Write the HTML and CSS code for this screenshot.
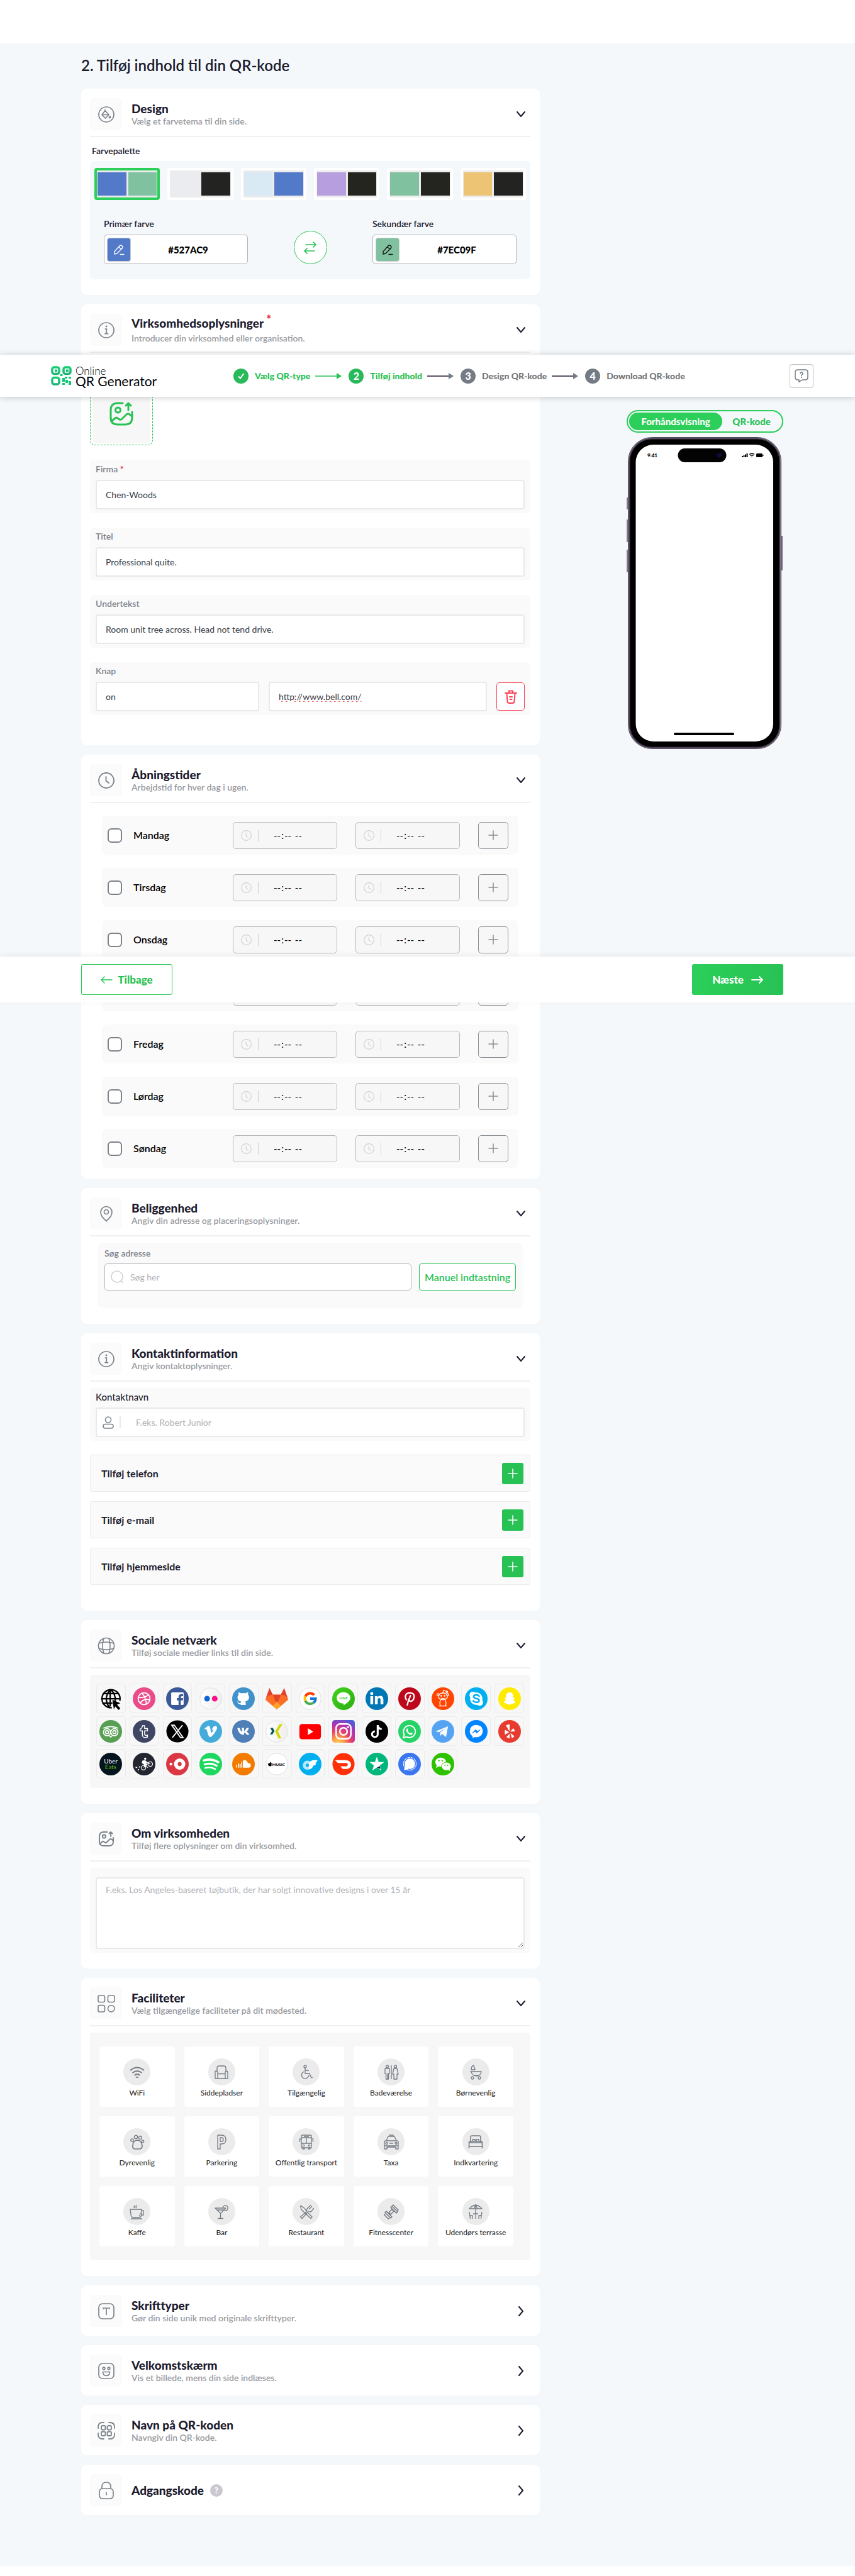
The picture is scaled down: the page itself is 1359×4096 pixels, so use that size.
FILE: index.html
```html
<!DOCTYPE html>
<html lang="da">
<head>
<meta charset="utf-8">
<meta name="viewport" content="width=device-width, initial-scale=1">
<title>Online QR Generator</title>
<link rel="stylesheet" href="styles.css">
</head>
<body>
<svg class="defs" width="0" height="0" aria-hidden="true">
  <defs>
    <linearGradient id="lg" x1="0" y1="0" x2="0" y2="1"><stop offset="0" stop-color="#10d070"/><stop offset="1" stop-color="#22b378"/></linearGradient>
    <linearGradient id="pale" x1="0" y1="0" x2="1" y2="0"><stop offset="0" stop-color="#fff"/><stop offset="1" stop-color="#eee"/></linearGradient>
    <linearGradient id="line" x1="0" y1="0" x2="1" y2="1"><stop offset="0" stop-color="#3fd31a"/><stop offset="1" stop-color="#2fae12"/></linearGradient>
    <radialGradient id="ig" cx=".25" cy="1.05" r="1.15"><stop offset="0" stop-color="#fed75e"/><stop offset=".25" stop-color="#f99b44"/><stop offset=".5" stop-color="#e8416c"/><stop offset=".75" stop-color="#b232b0"/><stop offset="1" stop-color="#4c5fd8"/></radialGradient>
  </defs>
  <symbol id="down" viewBox="0 0 16 16"><path d="M2 4l6 7 6-7" fill="none" stroke="currentColor" stroke-width="2" stroke-linecap="round" stroke-linejoin="round"/></symbol>
  <symbol id="right" viewBox="0 0 16 16"><path d="M5 1l6 7-6 7" fill="none" stroke="currentColor" stroke-width="2" stroke-linecap="round" stroke-linejoin="round"/></symbol>
  <symbol id="plus" viewBox="0 0 16 16"><path d="M8 1v14M1 8h14" fill="none" stroke="currentColor" stroke-width="1.6" stroke-linecap="round"/></symbol>
  <symbol id="clock" viewBox="0 0 26 26"><g fill="none" stroke="currentColor" stroke-width="1.8" stroke-linecap="round"><circle cx="13" cy="13" r="12"/><path d="M12.500 7v6.500l4.500 3.500"/></g></symbol>
  <symbol id="info" viewBox="0 0 26 26"><g fill="none" stroke="currentColor" stroke-width="1.700" stroke-linecap="round"><circle cx="13" cy="13" r="12"/><path d="M11.300 11h2v7.500M11 18.700h4.500"/><circle cx="13" cy="7" r=".6" fill="currentColor"/></g></symbol>
  <symbol id="picture" viewBox="0 0 40 40"><g fill="none" stroke="currentColor" stroke-width="3" stroke-linecap="round" stroke-linejoin="round"><path d="M22 3H14Q3 3 3 14v12q0 11 11 11h12q11 0 11-11V17"/><circle cx="14.500" cy="14" r="4"/><path d="M31 14V3M27 7l4-4 4 4M4 32l6-5q2-2 4 0l3 2q2 1 4-1l7-7q3-2 5 0l4 3"/></g></symbol>
  <symbol id="pencil" viewBox="0 0 18 18"><g fill="none" stroke="currentColor" stroke-width="1.300" stroke-linejoin="round" stroke-linecap="round"><path d="M2 16V12L10 3q2-2 4 0t0 4L6 15z M9 5l4 3.500M11 16.500h6"/></g></symbol>
</svg>

<header class="topbar">
  <a class="logo" href="#">
    <svg width="33" height="31" viewBox="0 0 33 31" aria-hidden="true"><g fill="none" stroke="url(#lg)" stroke-width="3.500"><rect x="2" y="2" width="11" height="10.500" rx="3"/><rect x="20" y="2" width="11" height="10.500" rx="3"/><rect x="2" y="18.500" width="11" height="10.500" rx="3"/></g><g fill="#12c777"><path d="M6 5.500h4v4H6zM24 5.500h4v4h-4zM14.500 13h4v3h-4zM18 19h4v6h-4zM22 17h4v3h-4zM28 17h4v3h-4zM23 22h4v5h-4zM18 27h4v3h-4zM28 24h4v6h-4z"/></g></svg>
    <span class="logo-text"><span class="logo-a">Online</span><span class="logo-b">QR Generator</span></span>
  </a>
  <ol class="steps">
    <li class="on"><span class="num"><svg width="12" height="12" viewBox="0 0 12 12" aria-hidden="true"><path d="M2 6.500L5 9.500 10.500 2" fill="none" stroke="#fff" stroke-width="2"/></svg></span>Vælg QR-type<svg class="arr" width="42" height="12" viewBox="0 0 42 12" aria-hidden="true"><path d="M0 6h36" stroke="#28c254" stroke-width="1.500"/><path d="M34 1l8 5-8 5z" fill="#28c254"/></svg></li>
    <li class="on"><span class="num">2</span>Tilføj indhold<svg class="arr" width="42" height="12" viewBox="0 0 42 12" aria-hidden="true"><path d="M0 6h36" stroke="#281a30" stroke-width="1.500"/><path d="M34 1l8 5-8 5z" fill="#757b84"/></svg></li>
    <li><span class="num">3</span>Design QR-kode<svg class="arr" width="42" height="12" viewBox="0 0 42 12" aria-hidden="true"><path d="M0 6h36" stroke="#281a30" stroke-width="1.500"/><path d="M34 1l8 5-8 5z" fill="#757b84"/></svg></li>
    <li><span class="num">4</span>Download QR-kode</li>
  </ol>
  <button class="help" type="button" aria-label="Hjælp"><svg width="22" height="22" viewBox="0 0 22 22" aria-hidden="true"><g fill="none" stroke="#757b84" stroke-width="1.500" stroke-linecap="round" stroke-linejoin="round"><path d="M5 1h12q4 0 4 4v8q0 4-4 4h-5l-5 3.500V17H5q-4 0-4-4V5q0-4 4-4z"/><path d="M9 7q0-2 2-2t2 2q0 1-1 1.700T11 10.500"/><circle cx="11" cy="13" r=".4"/></g></svg></button>
</header>

<main class="page">
  <h1>2. Tilføj indhold til din QR-kode</h1>
  <div class="columns">
    <div class="cards">

      <section class="card">
        <div class="head ruled">
          <span class="tile"><svg width="26" height="26" viewBox="0 0 26 26" aria-hidden="true"><g fill="none" stroke="currentColor" stroke-width="1.700" stroke-linejoin="round"><circle cx="13" cy="13" r="12"/><path d="M11 5v3M11 7l6 6.500-5.500 5.500L6 13.500z M6 13.500h11"/></g><path d="M19 15q2 3 0 4-2 .5-2-1.500 1-1 2-2.500z" fill="currentColor" stroke="currentColor"/></svg></span>
          <div class="head-text"><h2>Design</h2><p>Vælg et farvetema til din side.</p></div>
          <button class="chev" type="button" aria-label="Luk Design"><svg width="16" height="16"><use href="#down"/></svg></button>
        </div>
        <p class="palette-label">Farvepalette</p>
        <div class="palette">
          <div class="swatches">
            <button type="button" class="swatch chosen" aria-label="Blå og grøn"><i style="background:#527ac9"></i><i style="background:#80c1a0"></i></button>
            <button type="button" class="swatch" aria-label="Grå og sort"><i style="background:#ebecf0"></i><i style="background:#232322"></i></button>
            <button type="button" class="swatch" aria-label="Lyseblå og blå"><i style="background:#daeaf5"></i><i style="background:#527ac9"></i></button>
            <button type="button" class="swatch" aria-label="Lilla og sort"><i style="background:#b69edf"></i><i style="background:#252520"></i></button>
            <button type="button" class="swatch" aria-label="Grøn og sort"><i style="background:#80c1a0"></i><i style="background:#252520"></i></button>
            <button type="button" class="swatch" aria-label="Gul og sort"><i style="background:#ecc474"></i><i style="background:#232322"></i></button>
          </div>
          <div class="colors">
            <div class="color">
              <label for="c1">Primær farve</label>
              <div class="color-box"><span class="chip blue"><svg width="18" height="18" aria-hidden="true"><use href="#pencil"/></svg></span><input id="c1" type="text" value="#527AC9"></div>
            </div>
            <button class="swap" type="button" aria-label="Byt farver"><svg width="20" height="22" viewBox="0 0 20 22" aria-hidden="true"><path d="M3 6h16M15 2l4 4-4 4M17 16H1M5 12l-4 4 4 4" fill="none" stroke="#28c254" stroke-width="1.700" stroke-linecap="round" stroke-linejoin="round"/></svg></button>
            <div class="color">
              <label for="c2">Sekundær farve</label>
              <div class="color-box"><span class="chip green"><svg width="18" height="18" aria-hidden="true"><use href="#pencil"/></svg></span><input id="c2" type="text" value="#7EC09F"></div>
            </div>
          </div>
        </div>
      </section>

      <section class="card company">
        <div class="head ruled">
          <span class="tile"><svg width="26" height="26" aria-hidden="true"><use href="#info"/></svg></span>
          <div class="head-text spaced"><h2>Virksomhedsoplysninger <sup>*</sup></h2><p>Introducer din virksomhed eller organisation.</p></div>
          <button class="chev" type="button" aria-label="Luk Virksomhedsoplysninger"><svg width="16" height="16"><use href="#down"/></svg></button>
        </div>
        <button class="upload" type="button" aria-label="Upload billede"><span><svg width="40" height="40" aria-hidden="true"><use href="#picture"/></svg></span></button>
        <div class="group"><label for="f1">Firma <b>*</b></label><input id="f1" class="field" type="text" value="Chen-Woods"></div>
        <div class="group"><label for="f2">Titel</label><input id="f2" class="field" type="text" value="Professional quite."></div>
        <div class="group"><label for="f3">Undertekst</label><input id="f3" class="field" type="text" value="Room unit tree across. Head not tend drive."></div>
        <div class="group"><label for="f4">Knap</label>
          <div class="pair"><input id="f4" class="field" type="text" value="on"><input class="field typo" type="text" value="http://www.bell.com/" aria-label="Link"><button class="trash" type="button" aria-label="Slet knap"><svg width="20" height="22" viewBox="0 0 20 22" aria-hidden="true"><g fill="none" stroke="#fa4156" stroke-width="2" stroke-linecap="round" stroke-linejoin="round"><path d="M1 5h18M7 4V1.500h6V4M3.500 6l1 12q0 3 3 3h5q3 0 3-3l1-12M8 11h4M8.500 15h3"/></g></svg></button></div>
        </div>
      </section>

      <section class="card hours">
        <div class="head ruled">
          <span class="tile"><svg width="26" height="26" aria-hidden="true"><use href="#clock"/></svg></span>
          <div class="head-text"><h2>Åbningstider</h2><p>Arbejdstid for hver dag i ugen.</p></div>
          <button class="chev" type="button" aria-label="Luk Åbningstider"><svg width="16" height="16"><use href="#down"/></svg></button>
        </div>
        <div class="days">
          <div class="day"><label><input type="checkbox">Mandag</label><span class="time"><svg width="17" height="17"><use href="#clock"/></svg><input type="time" disabled aria-label="Mandag fra"></span><span class="time"><svg width="17" height="17"><use href="#clock"/></svg><input type="time" disabled aria-label="Mandag til"></span><button type="button" aria-label="Tilføj tid"><svg width="16" height="16"><use href="#plus"/></svg></button></div>
          <div class="day"><label><input type="checkbox">Tirsdag</label><span class="time"><svg width="17" height="17"><use href="#clock"/></svg><input type="time" disabled aria-label="Tirsdag fra"></span><span class="time"><svg width="17" height="17"><use href="#clock"/></svg><input type="time" disabled aria-label="Tirsdag til"></span><button type="button" aria-label="Tilføj tid"><svg width="16" height="16"><use href="#plus"/></svg></button></div>
          <div class="day"><label><input type="checkbox">Onsdag</label><span class="time"><svg width="17" height="17"><use href="#clock"/></svg><input type="time" disabled aria-label="Onsdag fra"></span><span class="time"><svg width="17" height="17"><use href="#clock"/></svg><input type="time" disabled aria-label="Onsdag til"></span><button type="button" aria-label="Tilføj tid"><svg width="16" height="16"><use href="#plus"/></svg></button></div>
          <div class="day"><label><input type="checkbox" aria-label="Torsdag"></label><span class="time"><input type="time" disabled aria-label="Torsdag fra"></span><span class="time"><input type="time" disabled aria-label="Torsdag til"></span><button type="button" aria-label="Tilføj tid"></button></div>
          <div class="day"><label><input type="checkbox">Fredag</label><span class="time"><svg width="17" height="17"><use href="#clock"/></svg><input type="time" disabled aria-label="Fredag fra"></span><span class="time"><svg width="17" height="17"><use href="#clock"/></svg><input type="time" disabled aria-label="Fredag til"></span><button type="button" aria-label="Tilføj tid"><svg width="16" height="16"><use href="#plus"/></svg></button></div>
          <div class="day"><label><input type="checkbox">Lørdag</label><span class="time"><svg width="17" height="17"><use href="#clock"/></svg><input type="time" disabled aria-label="Lørdag fra"></span><span class="time"><svg width="17" height="17"><use href="#clock"/></svg><input type="time" disabled aria-label="Lørdag til"></span><button type="button" aria-label="Tilføj tid"><svg width="16" height="16"><use href="#plus"/></svg></button></div>
          <div class="day"><label><input type="checkbox">Søndag</label><span class="time"><svg width="17" height="17"><use href="#clock"/></svg><input type="time" disabled aria-label="Søndag fra"></span><span class="time"><svg width="17" height="17"><use href="#clock"/></svg><input type="time" disabled aria-label="Søndag til"></span><button type="button" aria-label="Tilføj tid"><svg width="16" height="16"><use href="#plus"/></svg></button></div>
        </div>
      </section>

      <section class="card">
        <div class="head ruled">
          <span class="tile"><svg width="26" height="26" viewBox="0 0 26 26" aria-hidden="true"><g fill="none" stroke="currentColor" stroke-width="1.700"><path d="M13 24.500Q4 17 4 10.500a9 9 0 0 1 18 0Q22 17 13 24.500z"/><circle cx="13" cy="10" r="3.500"/></g></svg></span>
          <div class="head-text"><h2>Beliggenhed</h2><p>Angiv din adresse og placeringsoplysninger.</p></div>
          <button class="chev" type="button" aria-label="Luk Beliggenhed"><svg width="16" height="16"><use href="#down"/></svg></button>
        </div>
        <div class="address">
          <label for="adr">Søg adresse</label>
          <div class="address-row">
            <div class="search"><svg width="21" height="21" viewBox="0 0 21 21" aria-hidden="true"><g fill="none" stroke="#d0d2d5" stroke-width="1.500"><circle cx="10" cy="10" r="9"/><path d="M16 16l4 4"/></g></svg><input id="adr" type="text" placeholder="Søg her"></div>
            <button class="manual" type="button">Manuel indtastning</button>
          </div>
        </div>
      </section>

      <section class="card contact">
        <div class="head ruled">
          <span class="tile"><svg width="26" height="26" aria-hidden="true"><use href="#info"/></svg></span>
          <div class="head-text"><h2>Kontaktinformation</h2><p>Angiv kontaktoplysninger.</p></div>
          <button class="chev" type="button" aria-label="Luk Kontaktinformation"><svg width="16" height="16"><use href="#down"/></svg></button>
        </div>
        <div class="group first"><label class="dark" for="kn">Kontaktnavn</label>
          <div class="field person"><svg width="18" height="20" viewBox="0 0 18 20" aria-hidden="true"><g fill="none" stroke="#7b838b" stroke-width="1.500"><circle cx="9" cy="5.500" r="4.500"/><rect x="1" y="12.500" width="16" height="6.500" rx="3.200"/></g></svg><input id="kn" type="text" placeholder="F.eks. Robert Junior"></div>
        </div>
        <div class="adders">
          <div class="adder">Tilføj telefon<button type="button" aria-label="Tilføj telefon"><svg width="16" height="16"><use href="#plus"/></svg></button></div>
          <div class="adder">Tilføj e-mail<button type="button" aria-label="Tilføj e-mail"><svg width="16" height="16"><use href="#plus"/></svg></button></div>
          <div class="adder">Tilføj hjemmeside<button type="button" aria-label="Tilføj hjemmeside"><svg width="16" height="16"><use href="#plus"/></svg></button></div>
        </div>
      </section>

      <section class="card">
        <div class="head ruled">
          <span class="tile"><svg width="28" height="28" viewBox="0 0 28 28" aria-hidden="true"><g fill="none" stroke="currentColor" stroke-width="1.600"><circle cx="14" cy="14" r="12.500"/><path d="M10 2Q6 14 10 26M18 2q4 12 0 24M2 10q12-4 24 0M2 18q12 4 24 0"/></g></svg></span>
          <div class="head-text"><h2>Sociale netværk</h2><p>Tilføj sociale medier links til din side.</p></div>
          <button class="chev" type="button" aria-label="Luk Sociale netværk"><svg width="16" height="16"><use href="#down"/></svg></button>
        </div>
        <div class="social">
          <button type="button" aria-label="Web"><svg viewBox="0 0 40 40"><g fill="none" stroke="#000" stroke-width="2.500"><path d="M22 36A16 16 0 1 1 36 24M18 36Q6 20 19 4M20 4q9 8 8 20M19 4v30M3 20h33M6 11h27M5 28h18"/></g><path d="M23 22l14 6-6 2.500 6 6.500-3 3-6-6.500-2.500 5z" fill="#000"/></svg></button>
          <button type="button" aria-label="Dribbble"><svg viewBox="0 0 40 40"><circle cx="20" cy="20" r="20" fill="#ea4c89"/><g fill="none" stroke="#fff" stroke-width="2"><circle cx="20" cy="20" r="10.500"/><path d="M16 10q8 9 8 20M10 18q12 1 18-5M13 28q6-9 17-6"/></g></svg></button>
          <button type="button" aria-label="Facebook"><svg viewBox="0 0 40 40"><circle cx="20" cy="20" r="20" fill="#3b5998"/><rect x="9" y="9" width="22" height="22" rx="1.500" fill="#fff"/><path d="M22 31v-8h-3v-4h3v-2q0-5 5-5h3v3.500h-2q-2 0-2 2V19h4l-.6 4H26v8z" fill="#3b5998"/></svg></button>
          <button type="button" aria-label="Flickr"><svg viewBox="0 0 40 40"><circle cx="20" cy="20" r="19" fill="url(#pale)" stroke="#ddd"/><circle cx="13.500" cy="20" r="5" fill="#1165d8"/><circle cx="27" cy="20" r="5" fill="#ff0f84"/></svg></button>
          <button type="button" aria-label="GitHub"><svg viewBox="0 0 40 40"><circle cx="20" cy="20" r="20" fill="#4191cb"/><path d="M20 10q-2 0-4 .6-3-2-4.600-1.600-.8 2 0 4Q9 15 9.500 19q.5 5.500 6.500 6-1 1-1 2.500-3 1-4.500-1.500-1-1.500-2-1.200 0 .5 1 1.200 1 4 5.500 3.500V31h9v-4q0-2-1-2.500 6-.5 6.800-6 .3-3.500-1.700-5.500.7-2.500-.2-4-1.800-.2-4.400 1.600Q22 10 20 10z" fill="#fff"/></svg></button>
          <button type="button" aria-label="GitLab"><svg viewBox="0 0 40 40"><path d="M1 18L7 1l6 12h14l6-12 6 17z" fill="#e24329"/><path d="M1 18l6-4 6-1h14l6 1 6 4 1 4-20 17L0 22z" fill="#fc6d26"/><path d="M13 13h14l-7 17z" fill="#e24329"/><path d="M20 39l-7-6 7-8 7 8z" fill="#fca326"/></svg></button>
          <button type="button" aria-label="Google"><svg viewBox="0 0 40 40"><circle cx="20" cy="20" r="19" fill="#fff" stroke="#ddd"/><g fill="none" stroke-width="4.500"><path d="M27 13.500A9.500 9.500 0 0 0 11.500 16" stroke="#ff3d00"/><path d="M11.500 16a9.500 9.500 0 0 0 0 8" stroke="#ffc107"/><path d="M11.500 24A9.500 9.500 0 0 0 26 27" stroke="#4caf50"/><path d="M20 20h9.500q0 4.500-3.500 7" stroke="#1976d2"/></g></svg></button>
          <button type="button" aria-label="LINE"><svg viewBox="0 0 40 40"><circle cx="20" cy="20" r="20" fill="url(#line)"/><path d="M20 8.500c7 0 12 4.500 12 10 0 6-8 10.500-12 13.500q1-3 0-3.500c-7 0-12-4.500-12-10s5-10 12-10z" fill="#fff"/><text x="20" y="21.500" text-anchor="middle" font-size="7" font-weight="700" fill="#3c3">LINE</text></svg></button>
          <button type="button" aria-label="LinkedIn"><svg viewBox="0 0 40 40"><circle cx="20" cy="20" r="20" fill="#0077b5"/><g fill="#fff"><circle cx="11" cy="11" r="2.700"/><path d="M8.500 15.500h5V30h-5zM16.500 15.500h4.800v2q1.500-2.500 4.700-2.500 5.500 0 5.500 6.500V30h-5v-7.500q0-3.500-2.400-3.500-2.600 0-2.600 3.500V30h-5z"/></g></svg></button>
          <button type="button" aria-label="Pinterest"><svg viewBox="0 0 40 40"><circle cx="20" cy="20" r="20" fill="#bd081c"/><path d="M14.500 22q-2-2-2-5 0-7 8-7.500 8 .5 7.500 7-.8 8-6.500 8-2 0-3-2l3-8M18.500 21L16 31" fill="none" stroke="#fff" stroke-width="2.500" stroke-linecap="round"/></svg></button>
          <button type="button" aria-label="Reddit"><svg viewBox="0 0 40 40"><circle cx="20" cy="20" r="20" fill="#ff4500"/><g fill="none" stroke="#fff" stroke-width="1.400"><ellipse cx="20" cy="16" rx="8" ry="6"/><circle cx="11.500" cy="13" r="2"/><circle cx="28.500" cy="13" r="2"/><path d="M20 10l1-5 5 2M16 22q-3 7 0 11h8q3-4 0-11M13 33h5M22 33h5M17 19q3 2 6 0"/><circle cx="27" cy="8" r="1.500"/></g><g fill="#fff"><circle cx="17" cy="15" r="1.500"/><circle cx="23" cy="15" r="1.500"/></g></svg></button>
          <button type="button" aria-label="Skype"><svg viewBox="0 0 40 40"><circle cx="20" cy="20" r="20" fill="#00aff0"/><circle cx="20" cy="20" r="11" fill="#fff"/><circle cx="14" cy="13.500" r="6" fill="#fff"/><circle cx="26" cy="26.500" r="6" fill="#fff"/><path d="M25 15.500q-2-2.500-5-2.300-4.500.3-4.500 3.300 0 2.500 4.500 3.200 5 .8 5 3.600 0 3-5 3.200-3.500 0-5.500-2.700" fill="none" stroke="#00aff0" stroke-width="2.800" stroke-linecap="round"/></svg></button>
          <button type="button" aria-label="Snapchat"><svg viewBox="0 0 40 40"><circle cx="20" cy="20" r="20" fill="#ffeb00"/><path d="M20 9q6 0 6.200 6v3.500l3 .5-2.500 2.500q1.500 3.500 4 4.500-1 2-4 2-1 2-2.700 1.500-2-.3-4 1.500-2-1.800-4-1.500-1.700.5-2.700-1.500-3 0-4-2 2.500-1 4-4.500L10.800 19l3-.5V15Q14 9 20 9z" fill="#fff"/></svg></button>

          <button type="button" aria-label="Tripadvisor"><svg viewBox="0 0 40 40"><circle cx="20" cy="20" r="20" fill="#589f54"/><g fill="none" stroke="#fff" stroke-width="1.800"><circle cx="13.500" cy="21.500" r="6.300"/><circle cx="26.500" cy="21.500" r="6.300"/><circle cx="13.500" cy="21.500" r="2.800"/><circle cx="26.500" cy="21.500" r="2.800"/><path d="M7 14.500q6-3 13-3t13 3M17 27l3 3 3-3"/></g></svg></button>
          <button type="button" aria-label="Tumblr"><svg viewBox="0 0 40 40"><circle cx="20" cy="20" r="20" fill="#3e4663"/><path d="M17 10h4v5h5v4h-5v6q0 3 5 1.500V30q-9 3-9-4v-7h-4v-3q4-1.500 4-6z" fill="none" stroke="#fff" stroke-width="1.600"/></svg></button>
          <button type="button" aria-label="X"><svg viewBox="0 0 40 40"><circle cx="20" cy="20" r="19.500" fill="#000"/><path d="M10 9h4.500L30 31h-4.500zM29 9L11 31" fill="none" stroke="#fff" stroke-width="2"/></svg></button>
          <button type="button" aria-label="Vimeo"><svg viewBox="0 0 40 40"><circle cx="20" cy="20" r="20" fill="#44abda"/><path d="M9 15l6-4.500q3-1 4 3.500l1.500 7q1 3 3-1 2-3.500-1.500-3 1.500-6.500 6.500-6.500 4 .5 2 6-3 7-9.500 13-3.500 2-5.500-3.500l-2.700-9q-.8-2-2.800-.5z" fill="#fff"/></svg></button>
          <button type="button" aria-label="VK"><svg viewBox="0 0 40 40"><circle cx="20" cy="20" r="20" fill="#507fb8"/><path d="M9 14h4q2 6 4.500 7v-5.500L16 14h5v5.500q2-.5 4.500-5.500h4q-1 4-4 6.200 3 1.800 5 5.800h-4.500q-2-3.500-5-4v4Q12 27 9 14z" fill="#fff"/></svg></button>
          <button type="button" aria-label="Xing"><svg viewBox="0 0 40 40"><circle cx="20" cy="20" r="19" fill="url(#pale)" stroke="#ddd"/><path d="M8.500 14H13l3 5.500-4 6H8l3.500-6z" fill="#05595c"/><path d="M25 7h5l-8 13 6 12.500h-5L17 20z" fill="#d4d600"/></svg></button>
          <button type="button" aria-label="YouTube"><svg viewBox="0 0 40 40"><rect x="1" y="7" width="38" height="27" rx="5" fill="#f00"/><path d="M16 14.500v12l9.500-6z" fill="#fff"/></svg></button>
          <button type="button" aria-label="Instagram"><svg viewBox="0 0 40 40"><rect width="40" height="40" rx="5" fill="url(#ig)"/><g fill="none" stroke="#fff" stroke-width="2.800"><rect x="7" y="7" width="26" height="26" rx="7"/><circle cx="20" cy="20" r="6.500"/></g><circle cx="28" cy="12.500" r="1.700" fill="#fff"/></svg></button>
          <button type="button" aria-label="TikTok"><svg viewBox="0 0 40 40"><circle cx="20" cy="20" r="20" fill="#000"/><path d="M21.500 9v16a5 5 0 1 1-5-5M21.500 9.500q1 6 7 6.500" fill="none" stroke="#fff" stroke-width="3.500"/></svg></button>
          <button type="button" aria-label="WhatsApp"><svg viewBox="0 0 40 40"><circle cx="20" cy="20" r="20" fill="#25d366"/><path d="M9 31l1.600-5.500A10.500 10.500 0 1 1 15 29.700z" fill="none" stroke="#fff" stroke-width="2.200"/><path d="M16 14.500l1.500 3-1 1.500q1.500 3 4.500 4.500l1.500-1.500 3 1.500q-.5 3-3.500 2.500-6-1.500-8-7.500 0-3.500 2-4z" fill="#fff"/></svg></button>
          <button type="button" aria-label="Telegram"><svg viewBox="0 0 40 40"><circle cx="20" cy="20" r="20" fill="#55a4f4"/><path d="M7 20l22-9-3.500 19-7-5.500-3 3.500-.5-6L26 14l-13 7.500z" fill="#fff"/></svg></button>
          <button type="button" aria-label="Messenger"><svg viewBox="0 0 40 40"><circle cx="20" cy="20" r="20" fill="#0084ff"/><path d="M20 8.500q11 .5 11.500 11Q31 29.500 20 30.500q-1.500 0-3-.4L13.500 32v-3.500q-5-3-5-9Q9 9 20 8.500z" fill="#fff"/><path d="M13 23l6-6 3 3 5-3-6 6-3-3z" fill="#0084ff" stroke="#0084ff"/></svg></button>
          <button type="button" aria-label="Yelp"><svg viewBox="0 0 40 40"><circle cx="20" cy="20" r="20" fill="#e93a2f"/><path d="M14 9.500L19.500 8v11zM12 18l6.500 3.500L12 25zM19.500 25v7L15 30zM22 24l6 4.500-3.500 3zM22 20l4.500-5 2.500 4.500z" fill="#fff" stroke="#fff" stroke-linejoin="round"/></svg></button>

          <button type="button" aria-label="Uber Eats"><svg viewBox="0 0 40 40"><circle cx="20" cy="20" r="20" fill="#04151f"/><text x="20" y="19" text-anchor="middle" font-size="11" fill="#fff">Uber</text><text x="20" y="28.500" text-anchor="middle" font-size="11" fill="#5fb709">Eats</text></svg></button>
          <button type="button" aria-label="Postmates"><svg viewBox="0 0 40 40"><circle cx="20" cy="20" r="20" fill="#232630"/><g fill="none" stroke="#fff" stroke-width="1.300"><circle cx="19" cy="26.500" r="4"/><circle cx="31" cy="20" r="4"/><path d="M19 26l9-8 3 2M22 23l5 3"/></g><path d="M17 14l5-1 3 3 4 1-5 1 1 4-4 4-1-5-4-3z" fill="#fff"/><circle cx="22" cy="10.500" r="2" fill="#fff"/><path d="M5 25h3v2H5zM9 29h2v2H9zM11 24h2v2h-2z" fill="#fff"/></svg></button>
          <button type="button" aria-label="OpenTable"><svg viewBox="0 0 40 40"><circle cx="20" cy="20" r="20" fill="#da3743"/><circle cx="24" cy="20" r="10" fill="#fff"/><circle cx="24" cy="20" r="3.500" fill="#da3743"/><circle cx="8.500" cy="20" r="2.500" fill="#fff"/></svg></button>
          <button type="button" aria-label="Spotify"><svg viewBox="0 0 40 40"><circle cx="20" cy="20" r="20" fill="#1ed760"/><g fill="none" stroke="#fff" stroke-linecap="round"><path d="M8 13.500q13-4 25 3" stroke-width="4"/><path d="M9 20.500q12-3.500 21.500 2.500" stroke-width="3.300"/><path d="M10 27q10-3 18 2" stroke-width="2.700"/></g></svg></button>
          <button type="button" aria-label="SoundCloud"><svg viewBox="0 0 40 40"><circle cx="20" cy="20" r="20" fill="#f27b00"/><path d="M19 14q6-3 9 4.500 5-.5 5 4-.3 4-4 4H19z" fill="#fff"/><path d="M8 21v5M11 19v7.500M14 20v6.500M17 16v10.500" stroke="#fff" stroke-width="1.800"/></svg></button>
          <button type="button" aria-label="Apple Music"><svg viewBox="0 0 40 40"><circle cx="20" cy="20" r="19" fill="#fff" stroke="#ddd"/><path d="M7.500 18q2-1.500 3.500.5-1.500 2 .3 3.300-1 2.200-2.300 2-1.500-.3-2.500 0-1.800-.8-2-3.500.5-2.800 3-2.300z"/><circle cx="8.700" cy="17" r=".9"/><text x="23" y="23" text-anchor="middle" font-size="7" font-weight="900">MUSIC</text></svg></button>
          <button type="button" aria-label="OnlyFans"><svg viewBox="0 0 40 40"><circle cx="20" cy="20" r="20" fill="#00aff0"/><circle cx="15" cy="22" r="8" fill="#b5e8fb"/><circle cx="15" cy="22" r="2.800" fill="#00aff0"/><path d="M18 18q3-5 8-5h7q-1 4-5 5 2 .7 3 .5-1.500 4-5.500 4-1.500 6-7.500 7z" fill="#fff"/></svg></button>
          <button type="button" aria-label="DoorDash"><svg viewBox="0 0 40 40"><circle cx="20" cy="20" r="19.500" fill="#ff3008"/><path d="M5 13h18q10 .5 10.500 8-.5 7-8 7.500h-7l-4-4.500h10q3 0 3-3t-3-3H10z" fill="#fff"/></svg></button>
          <button type="button" aria-label="Trustpilot"><svg viewBox="0 0 40 40"><circle cx="20" cy="20" r="20" fill="#00b67a"/><path d="M20 7l3.300 9.500H33l-7.800 6 3 9L20 26l-8.200 5.500 3-9L7 16.500h9.700z" fill="#fff"/><path d="M25.500 23.500L20 26l6.500 2.500z" fill="#025"/></svg></button>
          <button type="button" aria-label="Signal"><svg viewBox="0 0 40 40"><circle cx="20" cy="20" r="20" fill="#3a76f0"/><circle cx="20.500" cy="19.500" r="9.300" fill="#fff"/><path d="M10 31l2-8 6 6z" fill="#fff"/><circle cx="20.500" cy="19.500" r="11.200" fill="none" stroke="#fff" stroke-width="1.200" stroke-dasharray="5 1"/></svg></button>
          <button type="button" aria-label="WeChat"><svg viewBox="0 0 40 40"><circle cx="20" cy="20" r="20" fill="#2dc100"/><g fill="#fff"><ellipse cx="16" cy="16.500" rx="9.500" ry="8"/><path d="M9 22l-1 5 5-3z"/></g><ellipse cx="26" cy="24" rx="8.500" ry="7.300" fill="#fff" stroke="#2dc100"/><path d="M29 30l3 2.500V28z" fill="#fff"/><g fill="#2dc100"><circle cx="13" cy="14" r="1.300"/><circle cx="19" cy="14" r="1.300"/><circle cx="23.500" cy="22" r="1.100"/><circle cx="28.500" cy="22" r="1.100"/></g></svg></button>
        </div>
      </section>

      <section class="card">
        <div class="head ruled">
          <span class="tile"><svg width="26" height="26" viewBox="0 0 42 42" aria-hidden="true"><use href="#picture" width="42" height="42"/></svg></span>
          <div class="head-text"><h2>Om virksomheden</h2><p>Tilføj flere oplysninger om din virksomhed.</p></div>
          <button class="chev" type="button" aria-label="Luk Om virksomheden"><svg width="16" height="16"><use href="#down"/></svg></button>
        </div>
        <div class="group about"><textarea class="field" aria-label="Om virksomheden" placeholder="F.eks. Los Angeles-baseret tøjbutik, der har solgt innovative designs i over 15 år"></textarea></div>
      </section>

      <section class="card">
        <div class="head ruled">
          <span class="tile"><svg width="28" height="28" viewBox="0 0 28 28" aria-hidden="true"><g fill="none" stroke="currentColor" stroke-width="1.600"><rect x="1" y="1" width="10.500" height="10.500" rx="2.500"/><rect x="16.500" y="1" width="10.500" height="10.500" rx="2.500"/><rect x="1" y="16.500" width="10.500" height="10.500" rx="2.500"/><circle cx="21.800" cy="21.800" r="5.300"/></g></svg></span>
          <div class="head-text"><h2>Faciliteter</h2><p>Vælg tilgængelige faciliteter på dit mødested.</p></div>
          <button class="chev" type="button" aria-label="Luk Faciliteter"><svg width="16" height="16"><use href="#down"/></svg></button>
        </div>
        <div class="facilities">
          <button type="button"><span><svg viewBox="0 0 24 24"><path d="M1 9q11-9 22 0M4.500 13q7.500-6 15 0M7.500 17q4.500-4 9 0M10 20.500q2-1.700 4 0" stroke-width="1.800"/></svg></span>WiFi</button>
          <button type="button"><span><svg viewBox="0 0 24 24"><path d="M5 10V5q0-3 3-3h8q3 0 3 3v5M6 14.500h12M6 22v-9q0-3-2.500-3T2 13v9h20v-9q0-3-2-3t-2 3v9"/></svg></span>Siddepladser</button>
          <button type="button"><span><svg viewBox="0 0 24 24"><circle cx="10" cy="3" r="2"/><path d="M10 5v9h7l3 7 2-1M10 9h6M8 11q-5 3-3 8 3 5 8 2 3-2 3-4"/></svg></span>Tilgængelig</button>
          <button type="button"><span><svg viewBox="0 0 24 24"><circle cx="5.500" cy="3" r="2"/><circle cx="18.500" cy="3" r="2"/><path d="M2 6h7v8H7.500v9h-4v-9H2zM5.500 14v9M12 1v22M16 6h5l2 9h-2v8h-5v-8h-2z"/></svg></span>Badeværelse</button>
          <button type="button"><span><svg viewBox="0 0 24 24"><path d="M11 8H5q0-6 4-7zM4 11h17q-1 7-8 7-7-1-8-7zM9 17h8"/><circle cx="7" cy="21" r="2"/><circle cx="18" cy="21" r="2"/></svg></span>Børnevenlig</button>
          <button type="button"><span><svg viewBox="0 0 24 24"><circle cx="4" cy="9" r="2.200"/><circle cx="10" cy="4" r="2.700"/><circle cx="17" cy="5" r="2.500"/><circle cx="21" cy="11" r="1.800"/><path d="M12 9q-7 1-7 9-.5 5 4 5h6q5 0 5-5-1-9-8-9z" stroke-width="1.700"/></svg></span>Dyrevenlig</button>
          <button type="button"><span><svg viewBox="0 0 24 24"><path d="M6 1v22h4v-8h2q7 0 7-7t-7-7zM10 5h2q3 0 3 3t-3 3h-2z"/></svg></span>Parkering</button>
          <button type="button"><span><svg viewBox="0 0 24 24"><path d="M4 2q0-1 2-1h12q2 0 2 1v19H4zM4 5h16M4 14h16M12 5v9M4 7H1.500v5M20 7h2.500v5M6 21v2h3v-2M15 21v2h3v-2M8 3h8"/><circle cx="7.500" cy="17.500" r="1.200"/><circle cx="16.500" cy="17.500" r="1.200"/></svg></span>Offentlig transport</button>
          <button type="button"><span><svg viewBox="0 0 24 24"><path d="M4 10l3-7h10l3 7M9 3V1h6v2M1 12q0-2 2-2h18q2 0 2 2v11h-4v-3H5v3H1zM1 18h22M9 14h6"/><circle cx="4.500" cy="14" r="1.500"/><circle cx="19.500" cy="14" r="1.500"/></svg></span>Taxa</button>
          <button type="button"><span><svg viewBox="0 0 24 24"><path d="M4 12V4q0-2 2-2h12q2 0 2 2v8M1.500 22V13q0-2 2-2h17q2 0 2 2v9M1.500 19h21M1.500 13h21M7 10V8h4v2M13 10V8h4v2" stroke-width="1.600"/></svg></span>Indkvartering</button>
          <button type="button"><span><svg viewBox="0 0 24 24"><path d="M1 8h18v8q0 5-5 5H7q-5 0-5-5zM19 10h3v7h-3M2 23h18M15 19q2-1 2-6M8 6q-2-2 0-4M11 6q-2-2 0-5"/></svg></span>Kaffe</button>
          <button type="button"><span><svg viewBox="0 0 24 24"><path d="M2 6h17l-8.500 8.500zM10.500 14v8M6 22.500h9M5 9h11M14 6q1-5 6-4 4 3 1 7-2 2-5 1"/></svg></span>Bar</button>
          <button type="button"><span><svg viewBox="0 0 24 24"><path d="M3 2q8 5 9 9l9 9-2 2.500L9 13Q2 8 3 2zM13 14l-8 8.500-2.500-2.500 9-8M13 10q-1-2 1-4l5-5M15 11q3 2 5 0l4-5M16 8l5-5"/></svg></span>Restaurant</button>
          <button type="button"><span><svg viewBox="0 0 24 24"><path d="M8 13l5-5 3 3-5 5zM4 11L2 13l9 9 2-2zM2 15l-1 2 6 6 2-1M13 3l-2 2 9 9 2-2zM15 1l-2 2 8 8 2-2z" stroke-width="1.500"/></svg></span>Fitnesscenter</button>
          <button type="button"><span><svg viewBox="0 0 24 24"><path d="M2 7q4-5 10-6 6 1 10 6zM12 1v14M9 7l3-6 3 6M8 15h8M12 15v8M2 12l1.500 11M3 18h4v5M22 12l-1.500 11M21 18h-4v5"/></svg></span>Udendørs terrasse</button>
        </div>
      </section>

      <section class="card closed">
        <div class="head">
          <span class="tile"><svg width="26" height="26" viewBox="0 0 26 26" aria-hidden="true"><g fill="none" stroke="currentColor" stroke-width="1.700" stroke-linecap="round"><rect x="1" y="1" width="24" height="24" rx="6"/><path d="M8 9V8h10v1M13 8v10.500"/></g></svg></span>
          <div class="head-text"><h2>Skrifttyper</h2><p>Gør din side unik med originale skrifttyper.</p></div>
          <button class="chev" type="button" aria-label="Åbn Skrifttyper"><svg width="16" height="16"><use href="#right"/></svg></button>
        </div>
      </section>
      <section class="card closed">
        <div class="head">
          <span class="tile"><svg width="26" height="26" viewBox="0 0 26 26" aria-hidden="true"><g fill="none" stroke="currentColor" stroke-width="1.700" stroke-linejoin="round"><rect x="1" y="1" width="24" height="24" rx="6"/><circle cx="9" cy="9" r="1.800"/><circle cx="17" cy="9" r="1.800"/><path d="M7.500 14.500h11q0 6-5.500 6t-5.500-6z"/></g></svg></span>
          <div class="head-text"><h2>Velkomstskærm</h2><p>Vis et billede, mens din side indlæses.</p></div>
          <button class="chev" type="button" aria-label="Åbn Velkomstskærm"><svg width="16" height="16"><use href="#right"/></svg></button>
        </div>
      </section>
      <section class="card closed">
        <div class="head">
          <span class="tile"><svg width="28" height="28" viewBox="0 0 28 28" aria-hidden="true"><g fill="none" stroke="currentColor" stroke-width="1.800" stroke-linecap="round"><path d="M1 10V8q0-7 7-7h2M18 1h2q7 0 7 7v2M27 18v2q0 7-7 7h-2M10 27H8q-7 0-7-7v-2"/><rect x="6" y="6" width="6.500" height="6.500" rx="2"/><rect x="15.500" y="6" width="6.500" height="6.500" rx="2"/><rect x="6" y="15.500" width="6.500" height="6.500" rx="2"/><rect x="15.500" y="15.500" width="6.500" height="6.500" rx="2"/></g></svg></span>
          <div class="head-text"><h2>Navn på QR-koden</h2><p>Navngiv din QR-kode.</p></div>
          <button class="chev" type="button" aria-label="Åbn Navn på QR-koden"><svg width="16" height="16"><use href="#right"/></svg></button>
        </div>
      </section>
      <section class="card closed">
        <div class="head">
          <span class="tile"><svg width="26" height="28" viewBox="0 0 26 28" aria-hidden="true"><g fill="none" stroke="currentColor" stroke-width="1.700" stroke-linecap="round"><path d="M6 11V8q0-7 7-7t7 7v3"/><rect x="2" y="11" width="22" height="16" rx="5"/><path d="M13 17v4"/></g></svg></span>
          <div class="head-text row"><h2>Adgangskode</h2><span class="hint">?</span></div>
          <button class="chev" type="button" aria-label="Åbn Adgangskode"><svg width="16" height="16"><use href="#right"/></svg></button>
        </div>
      </section>
    </div>

    <aside class="preview">
      <div class="toggle"><button class="active" type="button">Forhåndsvisning</button><button type="button">QR-kode</button></div>
      <svg class="phone" viewBox="0 0 249 496" role="img" aria-label="Telefon">
        <g fill="#83748c"><rect x="0" y="96" width="5" height="19"/><rect x="0" y="131" width="5" height="36"/><rect x="0" y="179" width="5" height="36"/><rect x="243" y="157" width="5" height="55"/></g>
        <rect x="2.500" y=".5" width="243" height="495" rx="38" fill="#b8b0bc" stroke="#4a4150"/>
        <rect x="4.500" y="2.500" width="239" height="491" rx="36" fill="#000" stroke="#463c50" stroke-width="2"/>
        <rect x="14.500" y="12" width="218.500" height="472" rx="28" fill="#fff"/>
        <rect x="81.500" y="18" width="77" height="22" rx="11" fill="#030303"/>
        <circle cx="147" cy="29" r="3.500" fill="#0a0d40"/>
        <text x="33" y="32" font-size="8" font-weight="900">9:41</text>
        <g fill="#000"><path d="M183 30h2v2h-2zM185.500 29h2v3h-2zM188 27.500h2v4.500h-2zM190.500 26h2v6h-2z"/><rect x="206" y="26" width="10" height="6" rx="1.500"/><rect x="216.500" y="28" width="1" height="2"/></g>
        <path d="M195 27.500q4-2.500 8 0M196.500 29.500q2.500-1.500 5 0M198.500 31.500h1" fill="none" stroke="#000" stroke-width="1.300"/>
        <rect x="75" y="470" width="96" height="4" rx="2" fill="#000"/>
      </svg>
    </aside>
  </div>
</main>

<nav class="bottombar" aria-label="Trin">
  <button class="back" type="button"><svg width="19" height="12" viewBox="0 0 19 12" aria-hidden="true"><path d="M18 6H1M6 1L1 6l5 5" fill="none" stroke="currentColor" stroke-width="1.400" stroke-linecap="round" stroke-linejoin="round"/></svg>Tilbage</button>
  <button class="next" type="button">Næste<svg width="19" height="12" viewBox="0 0 19 12" aria-hidden="true"><path d="M1 6h17M13 1l5 5-5 5" fill="none" stroke="currentColor" stroke-width="1.800" stroke-linecap="round" stroke-linejoin="round"/></svg></button>
</nav>
</body>
</html>
```

FILE: styles.css
```css
* { box-sizing: border-box; }
body {
  position: relative;
  margin: 0;
  padding: 69px 0 16px;
  background: #fff;
  color: #1c1b2e;
  font-family: Lato, "Open Sans", sans-serif;
  font-size: 14px;
  line-height: 18px;
}
h1, h2, p, ol { margin: 0; padding: 0; }
button, input, textarea { font: inherit; color: inherit; margin: 0; }
button { padding: 0; border: 0; background: none; cursor: pointer; }
svg { display: block; flex: none; }
.defs { position: absolute; }

.page { background: #f4f8fb; padding: 20px 114px 81px 129px; }
h1 { font-size: 24px; line-height: 30px; font-weight: 600; margin-bottom: 22px; }
.columns { display: grid; grid-template-columns: minmax(0, 1fr) 249px; gap: 138px; }
.cards { display: flex; flex-direction: column; gap: 15px; }
.card { background: #fff; border-radius: 9px; padding: 15px 15px 25px 14px; }
.card.company { padding-bottom: 48px; }
.card.hours { padding-bottom: 17px; }
.card.contact { padding-bottom: 41px; }
.card.closed { padding-bottom: 14px; }

.head { display: flex; align-items: center; gap: 15px; }
.head.ruled { padding-bottom: 9px; border-bottom: 2px solid #f0f0f0; }
.tile { width: 51px; height: 51px; border-radius: 5px; background: #fbfbfb; color: #7b838b; display: grid; place-items: center; }
.head-text { flex: 1; }
.head-text.row { display: flex; align-items: center; gap: 10px; }
.head-text.spaced h2 { margin-bottom: 4px; }
h2 { font-size: 19px; line-height: 22px; font-weight: 900; }
h2 sup { color: #ee1c2e; font-size: 19px; line-height: 0; }
.head-text p { color: #989aa0; font-weight: 600; }
.hint { width: 20px; height: 20px; border-radius: 50%; background: #cbc9cf; color: #fff; text-align: center; line-height: 20px; font-weight: 700; }
.chev { width: 16px; height: 16px; margin-right: 7px; color: #1c1b2e; }

.palette-label { margin: 13px 3px 7px; font-weight: 600; }
.palette { background: #f4f8fb; border-radius: 6px; padding: 11px 7px 24px; }
.swatches { display: flex; gap: 12px; }
.swatch { flex: 1; height: 51px; display: flex; gap: 3px; background: #ebebeb; border: 4px solid #fff; border-radius: 4px; padding: 3px 1px; }
.swatch i { flex: 1; height: 37px; }
.swatch.chosen { border-color: #2bcf59; }
.colors { display: flex; justify-content: space-between; align-items: flex-end; margin: 29px 15px 0; }
.color { width: 229px; }
.color label { display: block; font-weight: 600; margin-bottom: 8px; }
.color-box { display: flex; align-items: center; height: 47px; padding: 4px; background: #fff; border: 1px solid #b4b4b8; border-radius: 5px; }
.color-box input { flex: 1; min-width: 0; margin-right: 35px; padding-left: 38px; border: 0; background: none; text-align: center; font-size: 15px; font-weight: 900; color: #000; }
.chip { width: 38px; height: 38px; border-radius: 4px; border: 1px solid #c9ccd2; display: grid; place-items: center; }
.chip.blue { background: #527ac9; color: #fff; }
.chip.green { background: #80c1a0; color: #111; }
.swap { width: 53px; height: 53px; border: 1px solid #28c254; border-radius: 50%; background: #fff; display: grid; place-items: center; }

.upload { display: block; width: 100px; height: 100px; margin: 47px 0 24px; padding: 3px; border: 1px dashed #28c254; border-radius: 8px; color: #28c254; }
.upload span { height: 100%; display: grid; place-items: center; background: #f7f7f7; border-radius: 5px; }
.group { background: #fafafa; border-radius: 6px; padding: 5px 9px 6px; }
.group + .group { margin-top: 23px; }
.group.first { margin-top: 10px; }
.group label { display: block; margin-bottom: 8px; color: #7a828a; font-weight: 600; }
.group label.dark { color: #1c1b2e; font-size: 15px; font-weight: 500; }
.group label b { color: #e8344a; }
.field { display: block; width: 100%; height: 47px; border: 2px solid #e9e9e9; border-radius: 4px; background: #fff; padding: 0 14px; color: #3a4048; outline: 0; }
.typo { text-decoration: underline wavy #f03030 1px; }
.pair { display: grid; grid-template-columns: 260fr 347fr 45px; gap: 15px; align-items: center; }
.trash { height: 45px; border: 1px solid #fa4156; border-radius: 5px; background: #fff; display: grid; place-items: center; }
.person { display: flex; align-items: center; padding: 0 9px; }
.person input { flex: 1; border: 0; border-left: 2px solid #e9e9e9; margin-left: 9px; padding: 0 0 0 24px; height: 19px; outline: 0; }
::placeholder { color: #b0b2b6; opacity: 1; }
.group.about { margin-top: 10px; padding-top: 15px; }
textarea.field { height: 114px; padding: 9px 14px; resize: vertical; }

.days { display: flex; flex-direction: column; gap: 21px; margin: 20px 19px 0; }
.day { display: grid; grid-template-columns: 1fr 166px 166px 48px; column-gap: 29px; align-items: center; height: 62px; padding: 0 16px 0 9px; background: #fafafa; border-radius: 7px; }
.day label { display: flex; align-items: center; gap: 18px; font-size: 16px; font-weight: 600; color: #000; }
.day input[type="checkbox"] { appearance: none; width: 23px; height: 23px; border: 2px solid #7b828a; border-radius: 6px; background: #fff; }
.time { display: flex; align-items: center; height: 43px; border: 1px solid #b8b8bb; border-radius: 5px; background: #f7f7f7; padding-left: 12px; }
.time svg { color: #d0d1d4; }
.time input { flex: 1; min-width: 0; height: 19px; margin-left: 10px; border: 0; border-left: 1px solid #d0d1d4; padding: 0 0 0 23px; background: none; color: #000; font-size: 15px; }
.time input::-webkit-calendar-picker-indicator { display: none; }
.day button { height: 43px; border: 1px solid #8c9198; border-radius: 5px; background: #f7f7f7; color: #8f9096; display: grid; place-items: center; }

.address { margin: 10px 12px 0; padding: 8px 11px 28px; background: #fafafa; border-radius: 9px; }
.address label { display: block; margin-bottom: 7px; font-weight: 600; color: #7a828a; }
.address-row { display: grid; grid-template-columns: 1fr 154px; gap: 12px; }
.search { display: flex; align-items: center; gap: 10px; height: 43px; padding: 0 9px; border: 1px solid #b4b4b8; border-radius: 5px; background: #fff; }
.search input { flex: 1; border: 0; padding: 0; outline: 0; }
.manual { height: 43px; border: 1px solid #28c254; border-radius: 4px; background: #fff; color: #28c254; font-size: 16px; font-weight: 600; white-space: nowrap; }

.adders { display: flex; flex-direction: column; gap: 15px; margin-top: 22px; }
.adder { display: flex; justify-content: space-between; align-items: center; height: 59px; padding: 0 10px 0 17px; background: #fafafa; border: 1px solid #ececec; border-radius: 3px; font-size: 16px; font-weight: 700; }
.adder button { width: 34px; height: 34px; border-radius: 3px; background: #28c254; color: #fff; display: grid; place-items: center; }

.social { display: grid; grid-template-columns: repeat(13, 1fr); gap: 5px 6px; margin-top: 10px; padding: 14px 10px 15px; background: #f7f7f7; border-radius: 4px; }
.social button { height: 47px; border: 1px solid #ececec; border-radius: 5px; display: grid; place-items: center; }
.social svg { width: 36px; height: 36px; }

.facilities { display: grid; grid-template-columns: repeat(5, 1fr); gap: 15px; margin-top: 10px; padding: 22px 27px 22px 15px; background: #f7f7f7; border-radius: 4px; }
.facilities button { display: flex; flex-direction: column; align-items: center; gap: 3px; height: 96px; padding-top: 19px; background: #fff; border-radius: 4px; font-size: 12px; color: #1a1a1a; white-space: nowrap; }
.facilities span { width: 43px; height: 43px; border-radius: 50%; background: #ebebeb; display: grid; place-items: center; }
.facilities svg { width: 24px; height: 24px; fill: none; stroke: #757b84; stroke-width: 1.3; stroke-linejoin: round; }

.preview { padding-top: 511px; }
.toggle { display: flex; height: 36px; padding: 2px; border: 2px solid #2bcf59; border-radius: 18px; }
.toggle button { flex: 1; border-radius: 15px; color: #28c254; font-size: 15px; font-weight: 900; }
.toggle .active { flex: 0 0 148px; background: #2bcf59; color: #fff; }
.phone { width: 100%; margin-top: 7px; }

.topbar { position: absolute; z-index: 2; top: 564px; left: 0; right: 0; height: 67px; display: flex; align-items: center; padding: 0 66px 0 81px; background: #fff; box-shadow: 0 1px 10px rgba(0, 0, 0, .2); }
.logo { display: flex; gap: 6px; align-items: center; width: 290px; color: #000; text-decoration: none; }
.logo-text { display: flex; flex-direction: column; line-height: 16px; }
.logo-a { font-size: 17px; font-weight: 300; }
.logo-b { font-size: 21px; }
.steps { display: flex; align-items: center; gap: 11px; list-style: none; color: #757779; font-size: 14px; font-weight: 900; }
.steps li { display: flex; align-items: center; white-space: nowrap; }
.steps .on { color: #28c254; }
.num { width: 24px; height: 24px; margin-right: 10px; border-radius: 50%; background: #757b84; color: #fff; display: grid; place-items: center; font-size: 16px; }
.on .num { background: #28b95a; }
.arr { margin-left: 8px; }
.help { width: 38px; height: 38px; margin-left: auto; border: 1px solid #c0c0c3; border-radius: 4px; display: grid; place-items: center; }

.bottombar { position: absolute; z-index: 2; top: 1521px; left: 0; right: 0; height: 73px; display: flex; align-items: center; justify-content: space-between; padding: 0 114px 0 129px; background: #fff; box-shadow: 0 -2px 10px rgba(0, 0, 0, .06); }
.bottombar button { width: 145px; height: 49px; display: flex; align-items: center; justify-content: center; border-radius: 3px; font-size: 17px; font-weight: 900; }
.back { gap: 8px; border: 1px solid #28c254; color: #28c254; }
.next { gap: 12px; color: #fff; background: linear-gradient(90deg, #2bcf59, #28c254); }
```
